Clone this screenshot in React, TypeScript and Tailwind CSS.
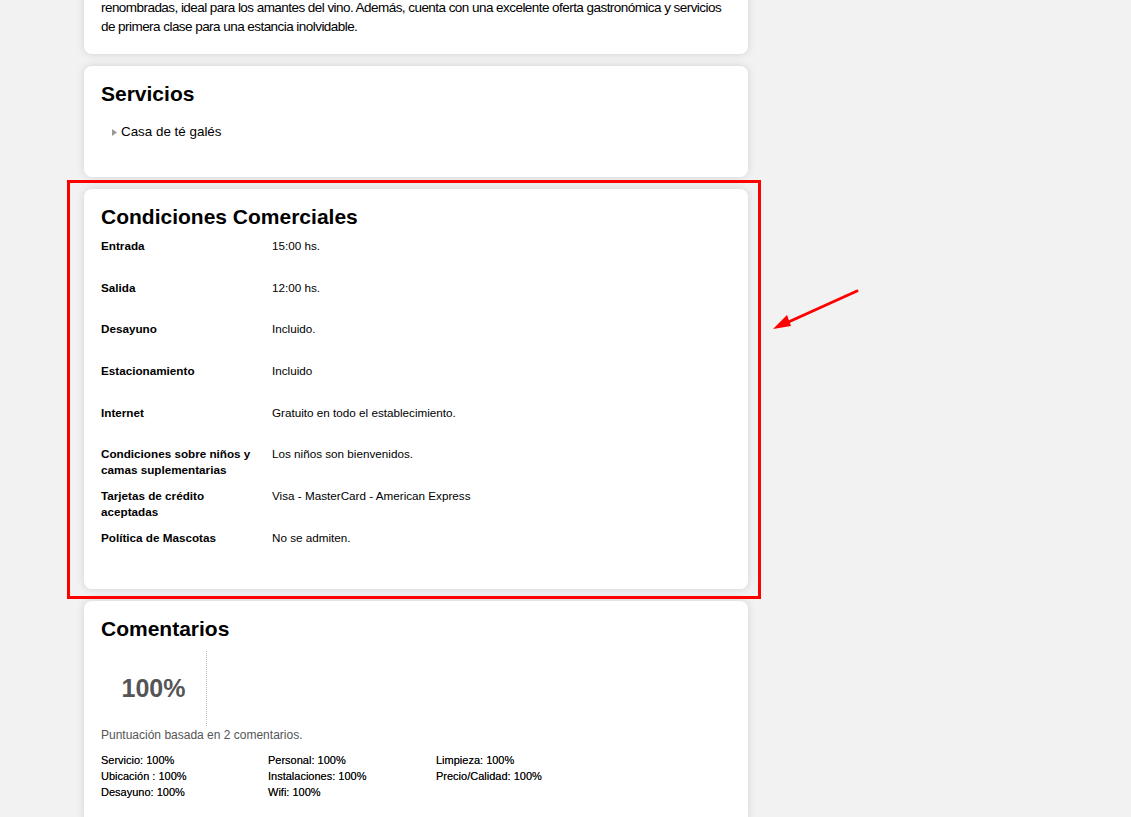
import React from 'react'

const CONDITIONS: [string, string][] = [
  ['Entrada', '15:00 hs.'],
  ['Salida', '12:00 hs.'],
  ['Desayuno', 'Incluido.'],
  ['Estacionamiento', 'Incluido'],
  ['Internet', 'Gratuito en todo el establecimiento.'],
  ['Condiciones sobre niños y camas suplementarias', 'Los niños son bienvenidos.'],
  ['Tarjetas de crédito aceptadas', 'Visa - MasterCard - American Express'],
  ['Política de Mascotas', 'No se admiten.'],
]

const SCORES = [
  'Servicio: 100%',
  'Personal: 100%',
  'Limpieza: 100%',
  'Ubicación : 100%',
  'Instalaciones: 100%',
  'Precio/Calidad: 100%',
  'Desayuno: 100%',
  'Wifi: 100%',
]

function Card({ children, className = '' }: { children: React.ReactNode; className?: string }) {
  return (
    <div className={`bg-white rounded-lg shadow-[0_0_8px_rgba(0,0,0,0.13)] px-[17px] ${className}`}>
      {children}
    </div>
  )
}

export default function App() {
  return (
    <div
      className="relative h-[817px] bg-[#f2f2f2] overflow-hidden text-black"
      style={{ fontFamily: '"Liberation Sans", Arial, sans-serif' }}
    >
      <div className="w-[664px] ml-[84px] flex flex-col gap-[12px] -mt-[22px] pb-10">
        <Card className="pt-[20px] pb-[18px] pr-[12px]">
          <p className="text-[13.5px] leading-[19px] tracking-[-0.55px]">
            renombradas, ideal para los amantes del vino. Además, cuenta con una excelente oferta gastronómica y servicios de primera clase para una estancia inolvidable.
          </p>
        </Card>

        <Card className="pt-[15px] pb-[37px]">
          <h2 className="text-[21px] leading-[25px] font-bold">Servicios</h2>
          <ul className="mt-[18px] pl-[11px]">
            <li className="flex items-center gap-[4px] text-[13.4px] leading-[16px]">
              <svg width="5" height="7" viewBox="0 0 5 7" className="shrink-0">
                <path d="M0 0 L5 3.5 L0 7 Z" fill="#9a9a9a" />
              </svg>
              Casa de té galés
            </li>
          </ul>
        </Card>

        <div className="relative">
          <div className="absolute -left-[17px] -right-[13px] -top-[9px] -bottom-[10px] border-[3px] border-[#ff0000] pointer-events-none" />
          <Card className="pt-[15px] pb-[17px]">
            <h2 className="text-[21px] leading-[25px] font-bold">Condiciones Comerciales</h2>
            <div className="mt-[9px] flex flex-col">
              {CONDITIONS.map(([k, v]) => (
                <div key={k} className="flex h-[41.7px] text-[11.7px] leading-[16px]">
                  <div className="w-[171px] shrink-0 pr-[14px] font-bold">{k}</div>
                  <div>{v}</div>
                </div>
              ))}
            </div>
          </Card>
        </div>

        <Card className="pt-[15px] pb-[24px]">
          <h2 className="text-[21px] leading-[25px] font-bold">Comentarios</h2>
          <div className="mt-[10px] flex">
            <div className="w-[106px] h-[75px] border-r border-dotted border-[#bbbbbb] flex items-center justify-center">
              <span className="text-[25px] font-bold text-[#555555] mt-[1px]">100%</span>
            </div>
          </div>
          <p className="mt-[1px] text-[12px] leading-[16px] text-[#555555]">
            Puntuación basada en 2 comentarios.
          </p>
          <div className="mt-[9px] grid grid-cols-[167px_168px_167px] text-[11px] leading-[16px] [text-shadow:0_0_0.2px_rgba(0,0,0,0.6)]">
            {SCORES.map((s) => (
              <div key={s}>{s}</div>
            ))}
          </div>
        </Card>
      </div>

      <svg className="absolute left-[768px] top-[284px]" width="96" height="52" viewBox="0 0 96 52">
        <line x1="89" y1="7" x2="16" y2="40" stroke="#ff0000" strokeWidth="3" strokeLinecap="round" />
        <path d="M5 45 L19 31 L23 42 Z" fill="#ff0000" />
      </svg>
    </div>
  )
}
